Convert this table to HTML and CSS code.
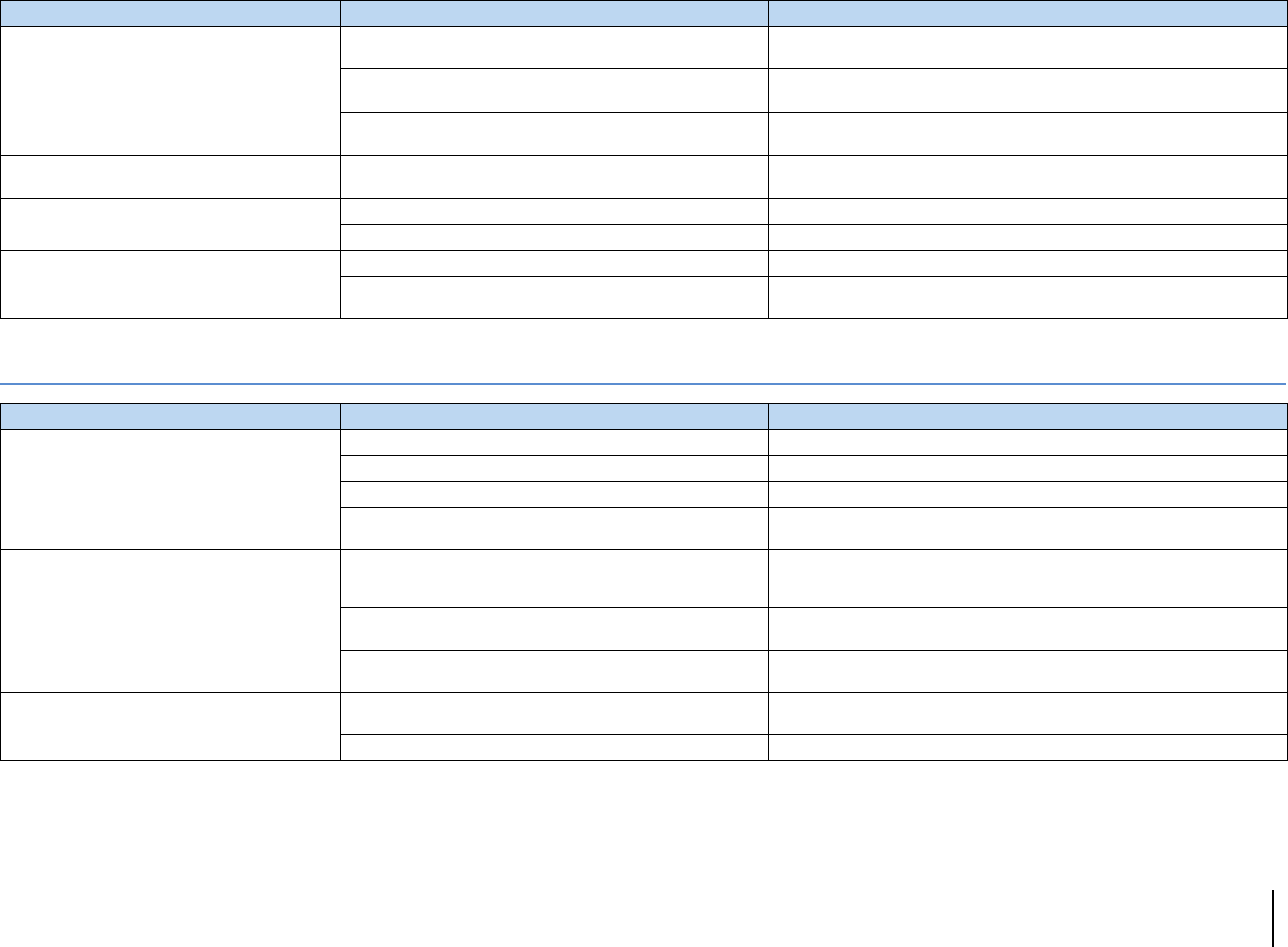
FILE: index.html
```html
<!DOCTYPE html>
<html>
<head>
<meta charset="utf-8">
<link rel="stylesheet" href="styles.css">
</head>
<body>
<div class="page">
  <table class="grid t1">
    <colgroup><col class="c1"><col class="c2"><col class="c3"></colgroup>
    <tr class="head h26"><th></th><th></th><th></th></tr>
    <tr class="h42"><td rowspan="3"></td><td></td><td></td></tr>
    <tr class="h44"><td></td><td></td></tr>
    <tr class="h43"><td></td><td></td></tr>
    <tr class="h43"><td></td><td></td><td></td></tr>
    <tr class="h26"><td rowspan="2"></td><td></td><td></td></tr>
    <tr class="h26"><td></td><td></td></tr>
    <tr class="h26"><td rowspan="2"></td><td></td><td></td></tr>
    <tr class="h42"><td></td><td></td></tr>
  </table>

  <div class="rule"></div>

  <table class="grid t2">
    <colgroup><col class="c1"><col class="c2"><col class="c3"></colgroup>
    <tr class="head h26"><th></th><th></th><th></th></tr>
    <tr class="h26"><td rowspan="4"></td><td></td><td></td></tr>
    <tr class="h26"><td></td><td></td></tr>
    <tr class="h26"><td></td><td></td></tr>
    <tr class="h42"><td></td><td></td></tr>
    <tr class="h58"><td rowspan="3"></td><td></td><td></td></tr>
    <tr class="h43"><td></td><td></td></tr>
    <tr class="h42"><td></td><td></td></tr>
    <tr class="h42"><td rowspan="2"></td><td></td><td></td></tr>
    <tr class="h26"><td></td><td></td></tr>
  </table>

  <div class="footer"><span class="edge-mark"></span></div>
</div>
</body>
</html>
```

FILE: styles.css
```css
html, body {
  margin: 0;
  padding: 0;
  background: #ffffff;
  font-family: "Liberation Sans", Arial, sans-serif;
}

.page {
  width: 1288px;
  height: 947px;
  display: flex;
  flex-direction: column;
  overflow: hidden;
}

.grid {
  border-collapse: collapse;
  table-layout: fixed;
  width: 1287px;
  margin-left: 0;
}

.grid .c1 { width: 340px; }
.grid .c2 { width: 428px; }
.grid .c3 { width: 519px; }

.grid th,
.grid td {
  border: 1.5px solid #000000;
  padding: 0;
}

.grid .head th {
  background: #bdd7f1;
}

.h26 { height: 26px; }
.h42 { height: 42px; }
.h43 { height: 43px; }
.h44 { height: 44px; }
.h58 { height: 58px; }

.rule {
  width: 1286px;
  height: 2px;
  background: #5b8dd0;
  margin-top: 64px;
}

.t2 {
  margin-top: 18px;
}

.footer {
  margin-top: auto;
  display: flex;
  justify-content: flex-end;
  padding-right: 14px;
}

.edge-mark {
  display: block;
  width: 2px;
  height: 57px;
  background: #000000;
}
```
